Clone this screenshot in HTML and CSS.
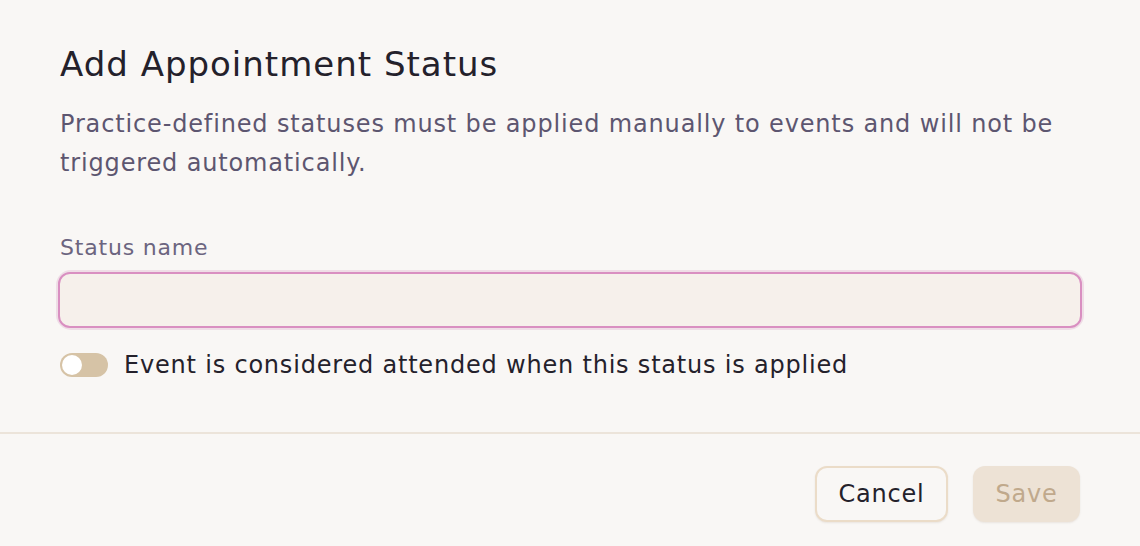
FILE: index.html
```html
<!DOCTYPE html>
<html>
<head>
<meta charset="utf-8">
<link rel="stylesheet" href="styles.css">
</head>
<body>
<div class="dialog">
  <div class="content">
    <h1 class="title">Add Appointment Status</h1>
    <p class="desc">Practice-defined statuses must be applied manually to events and will not be triggered automatically.</p>
    <label class="label" for="status">Status name</label>
    <div class="input-ring"><input id="status" class="input" type="text"></div>
    <div class="toggle-row">
      <span class="toggle"><span class="knob"></span></span>
      <span class="toggle-label">Event is considered attended when this status is applied</span>
    </div>
  </div>
  <div class="footer">
    <button class="btn btn-cancel">Cancel</button>
    <button class="btn btn-save">Save</button>
  </div>
</div>
</body>
</html>
```
FILE: styles.css
```css
html, body {
  margin: 0;
  padding: 0;
  background: #f9f7f5;
}
body {
  font-family: "DejaVu Sans", "Open Sans", sans-serif;
  width: 1140px;
  height: 546px;
  overflow: hidden;
}
.dialog {
  display: flex;
  flex-direction: column;
}
.content {
  padding: 43px 60px 0 60px;
  border-bottom: 2px solid #ece4da;
  box-sizing: border-box;
  height: 434px;
}
.title {
  margin: 0;
  font-size: 34px;
  font-weight: normal;
  line-height: 42px;
  letter-spacing: 1px;
  color: #24212b;
}
.desc {
  margin: 20px 0 0 0;
  font-size: 24px;
  line-height: 39px;
  letter-spacing: 0.85px;
  color: #5d5670;
}
.label {
  display: block;
  margin-top: 51px;
  font-size: 22px;
  line-height: 28px;
  letter-spacing: 0.8px;
  color: #6c6580;
}
.input-ring {
  margin-top: 8px;
  margin-left: -4px;
  margin-right: -4px;
  padding: 2px;
  border-radius: 15px;
  background: #efdde6;
}
.input {
  display: block;
  width: 100%;
  box-sizing: border-box;
  height: 56px;
  border: 2px solid #d98fc1;
  border-radius: 12px;
  background: #f6f0eb;
  outline: none;
  font: inherit;
}
.toggle-row {
  display: flex;
  align-items: center;
  gap: 16px;
  margin-top: 19px;
}
.toggle {
  width: 48px;
  height: 24px;
  border-radius: 12px;
  background: #d6c3a6;
  display: flex;
  align-items: center;
  padding: 2px;
  box-sizing: border-box;
}
.knob {
  width: 20px;
  height: 20px;
  border-radius: 50%;
  background: #fff;
}
.toggle-label {
  font-size: 24px;
  line-height: 32px;
  letter-spacing: 0.8px;
  color: #24212b;
}
.footer {
  display: flex;
  justify-content: flex-end;
  gap: 25px;
  padding: 32px 60px 0 0;
}
.btn {
  height: 56px;
  border-radius: 12px;
  font-family: inherit;
  font-size: 24px;
  letter-spacing: 0.8px;
  padding: 0;
  box-sizing: border-box;
  box-shadow: 0 1px 2px rgba(120, 100, 70, 0.12);
}
.btn-cancel {
  border: 2px solid #ebdcc8;
  background: #f9f7f5;
  color: #24212b;
  width: 133px;
}
.btn-save {
  border: none;
  background: #ede2d5;
  color: #c0a98c;
  width: 107px;
}
```
